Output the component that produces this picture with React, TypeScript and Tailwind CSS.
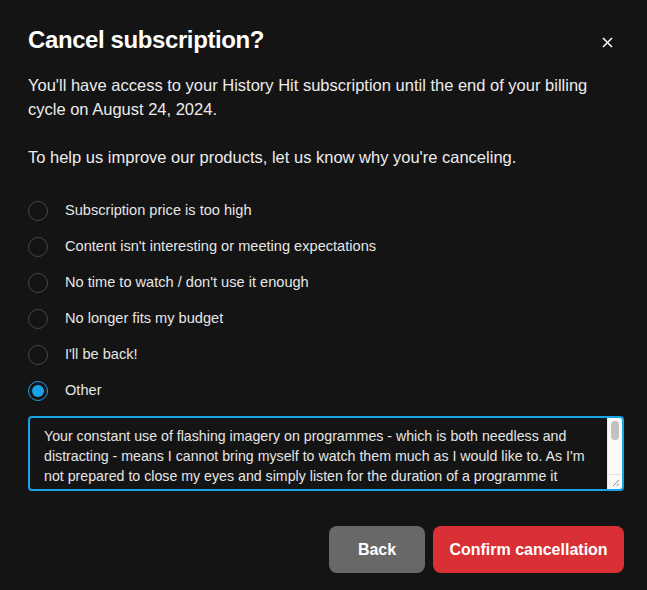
import React, { useState } from "react";

const reasons = [
  "Subscription price is too high",
  "Content isn't interesting or meeting expectations",
  "No time to watch / don't use it enough",
  "No longer fits my budget",
  "I'll be back!",
  "Other",
];

const TEXT =
  "Your constant use of flashing imagery on programmes - which is both needless and distracting - means I cannot bring myself to watch them much as I would like to. As I'm not prepared to close my eyes and simply listen for the duration of a programme it feels like I'm paying for a service I can't properly use.";

const FONT = "Helvetica, Arial, 'Liberation Sans', sans-serif";

export default function App() {
  const [sel, setSel] = useState(5);
  return (
    <div
      className="w-[647px] h-[590px] bg-[#141414] text-white pl-[28px] pr-[23px] pt-[24px] overflow-hidden"
      style={{ fontFamily: FONT }}
    >
      <div className="flex items-center justify-between h-[32px]">
        <h1 className="text-[24px] font-bold tracking-[-0.4px]">Cancel subscription?</h1>
        <button className="w-[24px] h-[24px] flex items-center justify-center mr-[5px] mt-[4px]">
          <svg width="11" height="11" viewBox="0 0 11 11" fill="none">
            <path d="M1 1L10 10M10 1L1 10" stroke="white" strokeWidth="1.5" />
          </svg>
        </button>
      </div>
      <p className="mt-[17px] text-[16.5px] leading-[24px] text-[#ececec]">
        You'll have access to your History Hit subscription until the end of your billing cycle on August 24, 2024.
      </p>
      <p className="mt-[24px] text-[16.5px] leading-[24px] text-[#ececec]">
        To help us improve our products, let us know why you're canceling.
      </p>
      <div className="mt-[24px] flex flex-col">
        {reasons.map((r, i) => (
          <label key={r} className="flex items-center h-[36px] cursor-pointer" onClick={() => setSel(i)}>
            <span
              className={
                i === sel
                  ? "w-[20px] h-[20px] rounded-full border-[1.5px] border-[#1aa3e8] flex items-center justify-center"
                  : "w-[20px] h-[20px] rounded-full border-[1.5px] border-[#464646]"
              }
            >
              {i === sel && <span className="w-[12px] h-[12px] rounded-full bg-[#1aa3e8]" />}
            </span>
            <span className="ml-[17px] text-[14.6px] text-[#e6e6e6]">{r}</span>
          </label>
        ))}
      </div>
      <div className="mt-[7px] flex w-[596px] h-[75px] border-2 border-[#1aa3e8] rounded-[4px] overflow-hidden">
        <textarea
          className="flex-1 min-w-0 h-full bg-transparent pl-[14px] pr-[18px] pt-[8px] text-[14.2px] leading-[20px] text-[#e6e6e6] outline-none resize-none overflow-hidden"
          defaultValue={TEXT}
          style={{ fontFamily: FONT }}
        />
        <div className="w-[15px] h-full bg-[#fafafa] border-l border-[#ececec] flex flex-col">
          <div className="flex-1 pt-[3px] px-[3px]">
            <div className="h-[19px] rounded-full bg-[#c1c1c1]" />
          </div>
          <div className="h-[15px] border-t border-[#e2e2e2] flex items-end justify-end p-[2px]">
            <svg width="8" height="8" viewBox="0 0 8 8">
              <path d="M7 1L1 7M7 4.5L4.5 7" stroke="#8a8a8a" strokeWidth="1" />
            </svg>
          </div>
        </div>
      </div>
      <div className="mt-[35px] flex justify-end gap-[8px]">
        <button className="w-[96px] h-[47px] rounded-[8px] bg-[#686868] text-[16px] font-bold">Back</button>
        <button className="w-[191px] h-[47px] rounded-[8px] bg-[#d93036] text-[16px] font-bold">
          Confirm cancellation
        </button>
      </div>
    </div>
  );
}
